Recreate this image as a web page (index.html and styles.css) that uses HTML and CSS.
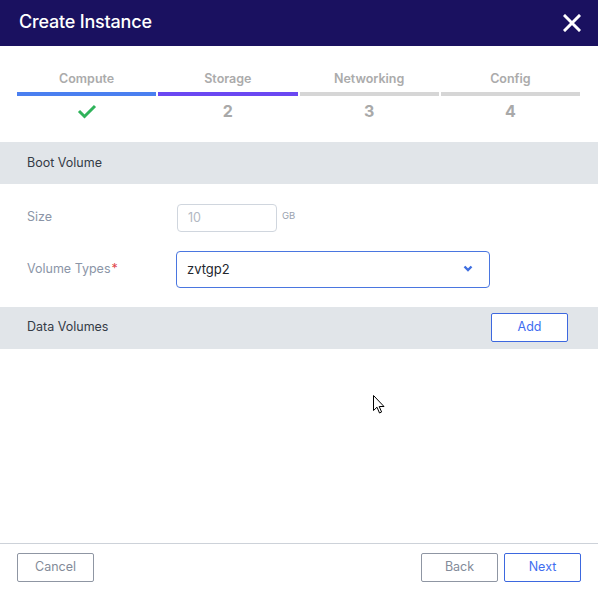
FILE: index.html
```html
<!DOCTYPE html>
<html>
<head>
<meta charset="utf-8">
<link rel="stylesheet" href="styles.css">
</head>
<body>
<div class="dialog">
  <div class="header">
    <div class="title">Create Instance</div>
    <svg class="close" width="18" height="18" viewBox="0 0 18 18"><path d="M2 2 L16 16 M16 2 L2 16" stroke="#fff" stroke-width="3" stroke-linecap="square"/></svg>
  </div>
  <div class="stepper">
    <div class="step">
      <div class="step-label">Compute</div>
      <div class="bar bar-done"></div>
      <div class="step-num"><svg width="20" height="16" viewBox="0 0 20 16"><path d="M2 8 L7.5 13.5 L18 3" fill="none" stroke="#2fb35a" stroke-width="3"/></svg></div>
    </div>
    <div class="step">
      <div class="step-label">Storage</div>
      <div class="bar bar-active"></div>
      <div class="step-num">2</div>
    </div>
    <div class="step">
      <div class="step-label">Networking</div>
      <div class="bar"></div>
      <div class="step-num">3</div>
    </div>
    <div class="step">
      <div class="step-label">Config</div>
      <div class="bar"></div>
      <div class="step-num">4</div>
    </div>
  </div>
  <div class="band band-first">Boot Volume</div>
  <div class="form">
    <div class="row">
      <div class="label">Size</div>
      <div class="input-size">10</div>
      <div class="unit">GB</div>
    </div>
    <div class="row row-select">
      <div class="label">Volume Types<span class="req">*</span></div>
      <div class="select">
        <span>zvtgp2</span>
        <svg width="10" height="7" viewBox="0 0 10 7"><path d="M1.5 1.5 L5 5 L8.5 1.5" fill="none" stroke="#3f6fe0" stroke-width="2.4"/></svg>
      </div>
    </div>
  </div>
  <div class="band band-data">
    <span>Data Volumes</span>
    <button class="btn btn-blue btn-add">Add</button>
  </div>
  <div class="spacer"></div>
  <div class="footer">
    <button class="btn btn-gray">Cancel</button>
    <div class="footer-right">
      <button class="btn btn-gray">Back</button>
      <button class="btn btn-blue">Next</button>
    </div>
  </div>
  <svg class="cursor" width="12" height="19" viewBox="0 0 12 19"><path d="M0.5 0.5 L0.5 15.5 L4 12.2 L6.5 18 L8.6 17 L6.2 11.5 L11 11.5 Z" fill="#fff" stroke="#000" stroke-width="1"/></svg>
</div>
</body>
</html>
```
FILE: styles.css
```css
html, body {
  margin: 0;
  padding: 0;
  background: #fff;
}
body {
  font-family: Inter, "Noto Sans", sans-serif;
  width: 598px;
  height: 589px;
  overflow: hidden;
}
.dialog {
  position: relative;
  width: 598px;
  height: 589px;
  display: flex;
  flex-direction: column;
}
.header {
  height: 46px;
  background: #1a1160;
  display: flex;
  align-items: center;
  justify-content: space-between;
  padding: 0 17px 3px 19px;
  box-sizing: border-box;
}
.title {
  color: #fff;
  font-size: 18px;
  font-weight: 500;
  letter-spacing: -0.2px;
}
.close {
  display: block;
  margin-top: 3px;
}
.stepper {
  display: flex;
  gap: 2px;
  padding: 0 18px 0 17px;
  margin-top: 25px;
}
.step {
  flex: 1;
  display: flex;
  flex-direction: column;
  align-items: stretch;
}
.step-label {
  text-align: center;
  font-size: 12.5px;
  font-weight: 600;
  color: #ababab;
  line-height: 16px;
}
.bar {
  height: 4px;
  margin-top: 5px;
  background: #d6d6d6;
}
.bar-done { background: #4a7ff0; }
.bar-active { background: #6b48f2; }
.step-num {
  height: 22px;
  margin-top: 4px;
  display: flex;
  align-items: center;
  justify-content: center;
  font-size: 16px;
  font-weight: 700;
  color: #a9a9a9;
}
.step-num svg { display: block; }
.band {
  height: 42px;
  box-sizing: border-box;
  background: #e1e5e9;
  display: flex;
  align-items: center;
  padding: 0 30px 2px 27px;
  font-size: 12.5px;
  color: #343b46;
}
.band-first { margin-top: 20px; }
.band-data { justify-content: space-between; padding-bottom: 0; }
.band-data span { padding-bottom: 3px; }
.form {
  padding: 20px 0 19px 27px;
  display: flex;
  flex-direction: column;
  gap: 19px;
}
.row {
  display: flex;
  align-items: center;
}
.label {
  width: 150px;
  font-size: 12.5px;
  color: #8b95a7;
  padding-bottom: 3px;
}
.row-select .label { width: 149px; }
.req { color: #e0454a; margin-left: 1px; }
.input-size {
  width: 100px;
  height: 28px;
  box-sizing: border-box;
  border: 1px solid #d0d6de;
  border-radius: 4px;
  padding: 0 10px 2px;
  font-size: 12.5px;
  color: #b2b8c2;
  display: flex;
  align-items: center;
}
.unit {
  margin-left: 5px;
  margin-top: -6px;
  font-size: 9.5px;
  color: #9aa2b0;
}
.select {
  width: 314px;
  height: 37px;
  box-sizing: border-box;
  border: 1px solid #4a76e0;
  border-radius: 4px;
  display: flex;
  align-items: center;
  justify-content: space-between;
  padding: 0 16px 2px 10px;
  font-size: 13px;
  color: #23272e;
}
.select svg { display: block; }
.btn {
  height: 29px;
  width: 77px;
  box-sizing: border-box;
  background: #fff;
  border-radius: 2px;
  font-family: Inter, "Noto Sans", sans-serif;
  font-size: 12.5px;
  padding: 0 0 2px;
  cursor: pointer;
}
.btn-add { margin-top: -1px; }
.btn-blue {
  border: 1px solid #3d68df;
  color: #3f6df0;
}
.btn-gray {
  border: 1px solid #8f96a3;
  color: #838b99;
}
.spacer { flex: 1; }
.footer {
  border-top: 1px solid #cdd2d9;
  height: 46px;
  box-sizing: border-box;
  display: flex;
  justify-content: space-between;
  padding: 9px 17px 0 17px;
}
.footer-right {
  display: flex;
  gap: 6px;
}
.cursor {
  position: absolute;
  left: 373px;
  top: 395px;
}
```
